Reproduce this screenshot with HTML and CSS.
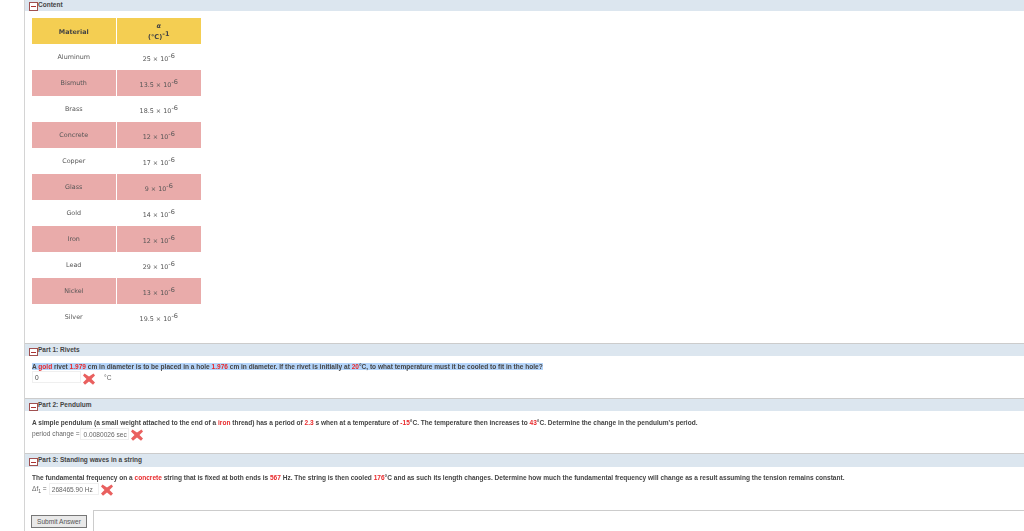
FILE: index.html
```html
<!DOCTYPE html>
<html lang="en">
<head>
<meta charset="utf-8">
<title>Content</title>
<link rel="stylesheet" href="styles.css">
</head>
<body>
<main class="page">
  <header class="bar bar-content">
    <span class="toggle"><span class="minus"></span></span><span class="bar-title">Content</span>
  </header>
  <table class="materials">
    <tr class="head"><th>Material</th><th><i class="alpha">α</i><br><span class="unit">(°C)<sup>-1</sup></span></th></tr>
    <tr><td>Aluminum</td><td><span class="val">25 × 10<sup>-6</sup></span></td></tr>
    <tr class="alt"><td>Bismuth</td><td><span class="val">13.5 × 10<sup>-6</sup></span></td></tr>
    <tr><td>Brass</td><td><span class="val">18.5 × 10<sup>-6</sup></span></td></tr>
    <tr class="alt"><td>Concrete</td><td><span class="val">12 × 10<sup>-6</sup></span></td></tr>
    <tr><td>Copper</td><td><span class="val">17 × 10<sup>-6</sup></span></td></tr>
    <tr class="alt"><td>Glass</td><td><span class="val">9 × 10<sup>-6</sup></span></td></tr>
    <tr><td>Gold</td><td><span class="val">14 × 10<sup>-6</sup></span></td></tr>
    <tr class="alt"><td>Iron</td><td><span class="val">12 × 10<sup>-6</sup></span></td></tr>
    <tr><td>Lead</td><td><span class="val">29 × 10<sup>-6</sup></span></td></tr>
    <tr class="alt"><td>Nickel</td><td><span class="val">13 × 10<sup>-6</sup></span></td></tr>
    <tr><td>Silver</td><td><span class="val">19.5 × 10<sup>-6</sup></span></td></tr>
  </table>

  <section class="part part-1">
    <header class="bar">
      <span class="toggle"><span class="minus"></span></span><span class="bar-title">Part 1: Rivets</span>
    </header>
    <p class="question"><span class="hl">A <b class="red">gold</b> rivet <b class="red">1.979</b> cm in diameter is to be placed in a hole <b class="red">1.976</b> cm in diameter. If the rivet is initially at <b class="red">20</b>°C, to what temperature must it be cooled to fit in the hole?</span></p>
    <div class="answer">
      <span class="input input-1">0</span>
      <svg class="cross" viewBox="0 0 12 12"><path d="M1.5 .5 6 3.5 10.5 .5 12 2.5 8.5 6 12 9.5 10 11.8 6 8.5 2 11.8 0 9.5 3.5 6 0 2.5z"/></svg>
      <span class="unit-label">°C</span>
    </div>
  </section>

  <section class="part part-2">
    <header class="bar">
      <span class="toggle"><span class="minus"></span></span><span class="bar-title">Part 2: Pendulum</span>
    </header>
    <p class="question">A simple pendulum (a small weight attached to the end of a <b class="red">iron</b> thread) has a period of <b class="red">2.3</b> s when at a temperature of <b class="red">-15</b>°C. The temperature then increases to <b class="red">43</b>°C. Determine the change in the pendulum's period.</p>
    <div class="answer answer-2">
      <span class="label">period change =</span>
      <span class="input input-2">0.0080026 sec</span>
      <svg class="cross" viewBox="0 0 12 12"><path d="M1.5 .5 6 3.5 10.5 .5 12 2.5 8.5 6 12 9.5 10 11.8 6 8.5 2 11.8 0 9.5 3.5 6 0 2.5z"/></svg>
    </div>
  </section>

  <section class="part part-3">
    <header class="bar">
      <span class="toggle"><span class="minus"></span></span><span class="bar-title">Part 3: Standing waves in a string</span>
    </header>
    <p class="question">The fundamental frequency on a <b class="red">concrete</b> string that is fixed at both ends is <b class="red">567</b> Hz. The string is then cooled <b class="red">176</b>°C and as such its length changes. Determine how much the fundamental frequency will change as a result assuming the tension remains constant.</p>
    <div class="answer answer-2">
      <span class="label">Δf<sub>1</sub> =</span>
      <span class="input input-3">268465.90 Hz</span>
      <svg class="cross" viewBox="0 0 12 12"><path d="M1.5 .5 6 3.5 10.5 .5 12 2.5 8.5 6 12 9.5 10 11.8 6 8.5 2 11.8 0 9.5 3.5 6 0 2.5z"/></svg>
    </div>
  </section>

  <footer class="submit-row">
    <button class="submit" type="button">Submit Answer</button>
    <div class="feedback"></div>
  </footer>
</main>
</body>
</html>
```

FILE: styles.css
```css
html, body {
  margin: 0;
  padding: 0;
  background: #fff;
  overflow: hidden;
}
body {
  font-family: "Liberation Sans", Arial, sans-serif;
  color: #333;
  height: 531px;
}
.page {
  margin-left: 24px;
  border-left: 1px solid #d4d4d4;
  height: 531px;
  box-sizing: border-box;
  filter: blur(.3px);
}
.bar {
  height: 12px;
  background: #dce6ef;
  display: flex;
  align-items: flex-start;
  position: relative;
  padding-left: 4px;
}
.bar-content {
  height: 11px;
}
.part .bar {
  border-top: 1px solid #ccc;
}
.toggle {
  width: 7px;
  height: 6px;
  border: 1px solid #a05050;
  background: #fff;
  display: flex;
  align-items: center;
  justify-content: center;
  margin-top: 4px;
  flex: none;
}
.bar-content .toggle {
  height: 7px;
  margin-top: 2px;
}
.minus {
  width: 5px;
  height: 1px;
  background: #a33;
}
.bar-title {
  font-size: 6.5px;
  font-weight: bold;
  line-height: 9px;
  color: #444;
}
.part .bar-title {
  line-height: 11px;
}
.materials {
  margin: 7px 0 0 7px;
  border-collapse: separate;
  border-spacing: 0;
  font-family: "DejaVu Sans", sans-serif;
  font-size: 6.4px;
  color: #555;
  table-layout: fixed;
  width: 169px;
}
.materials th, .materials td {
  height: 26px;
  padding: 0;
  text-align: center;
  font-weight: normal;
}
.materials th:first-child, .materials td:first-child {
  border-right: 1px solid #fff;
}
.materials sup {
  font-size: 6.5px;
  line-height: 0;
  vertical-align: 3px;
}
.materials .head th {
  height: 24px;
  padding-top: 2px;
  background: #f4ce52;
  color: #444;
  font-weight: bold;
  line-height: 11px;
}
.unit { font-size: 6.6px; }
.val {
  display: inline-block;
  padding-top: 3px;
}
.alt td {
  background: #e9abaa;
}
.alpha { font-size: 6.5px; }
.part-1 { margin-top: 13px; }
.part-2 { margin-top: 14px; }
.part-3 { margin-top: 14px; }
.part-3 .bar { height: 13px; }
.question {
  margin: 0;
  padding: 6px 0 0 7px;
  font-size: 6.56px;
  font-weight: bold;
  line-height: 9px;
  color: #444;
  white-space: nowrap;
}
.part-2 .question { padding-top: 7px; }
.hl { background: #b5d5fb; }
.red {
  color: #e8282a;
  font-weight: bold;
}
.answer {
  display: flex;
  align-items: flex-start;
  height: 13px;
  padding-left: 7px;
  font-size: 6.6px;
  color: #666;
  line-height: 12px;
}
.answer-2 {
  height: 11px;
  margin-top: 1px;
}
.input {
  display: block;
  border: 1px solid #efefef;
  box-sizing: border-box;
  height: 12px;
  line-height: 11px;
  padding-left: 2px;
  color: #666;
  font-size: 6.6px;
}
.input-1 { width: 49px; color: #444; }
.input-2 { width: 49px; margin-left: 1px; }
.input-3 { width: 50px; margin-left: 2px; }
.cross {
  width: 12px;
  height: 12px;
  fill: #e9605f;
  margin: 1px 0 0 2px;
}
.answer:not(.answer-2) .cross { margin-top: 2px; }
.unit-label {
  margin: 1px 0 0 9px;
}
.label sub { font-size: 5px; line-height: 0; }
.submit-row {
  display: flex;
  margin-top: 16px;
  padding-left: 6px;
}
.submit {
  width: 56px;
  height: 13px;
  margin: 5px 6px 0 0;
  padding: 0;
  font-family: inherit;
  font-size: 6.6px;
  color: #555;
  background: #e9e9e9;
  border: 1px solid #777;
  border-radius: 0;
  box-sizing: border-box;
}
.feedback {
  flex: 1;
  height: 21px;
  border-top: 1px solid #ccc;
  border-left: 1px solid #ccc;
}
```
